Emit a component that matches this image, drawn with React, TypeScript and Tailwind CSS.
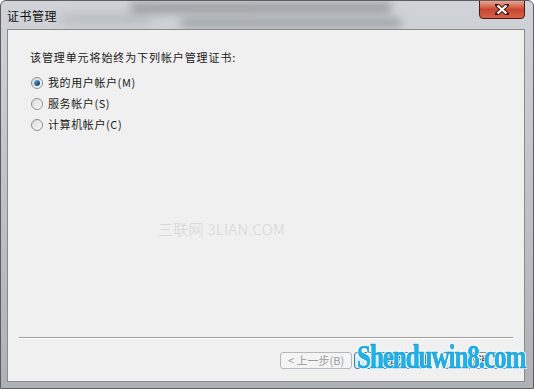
import React from 'react';

const cjk = { fontFamily: '"Noto Sans CJK SC", "Noto Sans", sans-serif' };

function Radio({ checked, label }: { checked?: boolean; label: string }) {
  return (
    <div className="flex items-center h-[21px]">
      <div className="w-[12px] h-[12px] rounded-full border border-[#8e9093] bg-gradient-to-br from-[#d9d9d9] to-[#fbfbfb] flex items-center justify-center shrink-0">
        {checked && (
          <div className="w-[6px] h-[6px] rounded-full bg-gradient-to-br from-[#8cc4e8] via-[#2a6c9c] to-[#0f3e66]" />
        )}
      </div>
      <span className="ml-[5px] text-[11px] leading-none text-[#1a1a1a] tracking-[0.6px]">{label}</span>
    </div>
  );
}

function Btn({ label, kind }: { label: string; kind: 'disabled' | 'default' | 'normal' }) {
  const cls =
    kind === 'disabled'
      ? 'border-[#b5b9bc] bg-[#f4f4f4] text-[#9a9a9a]'
      : kind === 'default'
      ? 'border-[#3c7fb1] bg-gradient-to-b from-[#eaf6fd] to-[#bee6fd] text-[#222]'
      : 'border-[#8c8c8c] bg-gradient-to-b from-[#f2f2f2] to-[#dcdcdc] text-[#222]';
  return (
    <div className={`w-[72px] h-[17px] rounded-[3px] border flex items-center justify-center text-[11px] leading-none ${cls}`}>
      {label}
    </div>
  );
}

export default function App() {
  return (
    <div className="w-[534px] h-[389px] relative overflow-hidden bg-white" style={cjk}>
      <div className="w-full h-full flex flex-col rounded-t-[6px] border border-[#5e5e5e] bg-gradient-to-b from-[#d0d4d8] via-[#bfc3c7] to-[#aeb2b6] relative overflow-hidden">
        {/* blurred glass streaks */}
        <div className="absolute left-[130px] top-[2px] w-[260px] h-[10px] bg-[#7e8286] blur-[5px] opacity-70" />
        <div className="absolute left-[180px] top-[18px] w-[220px] h-[8px] bg-[#73777b] blur-[5px] opacity-60" />
        <div className="absolute left-[60px] top-[14px] w-[90px] h-[8px] bg-[#9ea2a6] blur-[6px] opacity-60" />

        {/* title bar */}
        <div className="h-[28px] flex justify-between pl-[6px] pr-[8px] relative">
          <span className="text-[12px] leading-none text-[#111] mt-[9px] tracking-[0.5px]">证书管理</span>
          <div className="w-[46px] h-[19px] -mt-px rounded-b-[4px] border border-[#4a1a12] bg-gradient-to-b from-[#e8a593] via-[#c8462e] to-[#d8604a] flex items-center justify-center">
            <svg width="14" height="11" viewBox="0 0 14 11">
              <path d="M2 1 L12 10 M12 1 L2 10" stroke="#3a1a14" strokeWidth="4" strokeLinecap="square" />
              <path d="M2.5 1.5 L11.5 9.5 M11.5 1.5 L2.5 9.5" stroke="#ffffff" strokeWidth="2.2" />
            </svg>
          </div>
        </div>

        {/* client area */}
        <div className="flex-1 ml-[6px] mr-[8px] mb-[6px] border border-[#8a8a8a] bg-[#f0f0f0] flex flex-col relative">
          <div className="pl-[22px] pt-[22px]">
            <div className="text-[11px] leading-none text-[#1a1a1a] tracking-[0.9px]">该管理单元将始终为下列帐户管理证书:</div>
            <div className="mt-[9px] pl-[1px] flex flex-col">
              <Radio checked label="我的用户帐户(M)" />
              <Radio label="服务帐户(S)" />
              <Radio label="计算机帐户(C)" />
            </div>
          </div>

          <div className="flex-1 flex items-center pl-[150px]">
            <span className="text-[15px] text-[#d6d6d6] tracking-[0.3px] -mt-[14px]" style={{ fontFamily: '"Noto Sans CJK SC", Lato, sans-serif', fontWeight: 300 }}>
              三联网 3LIAN.COM
            </span>
          </div>

          <div className="mx-[11px] border-t border-[#a0a0a0] border-b border-b-white" />
          <div className="flex justify-end gap-[2px] pr-[10px] pt-[13px] pb-[12px]">
            <Btn label="< 上一步(B)" kind="disabled" />
            <Btn label="完成" kind="default" />
            <div className="w-[12px]" />
            <Btn label="取消" kind="normal" />
          </div>
        </div>
      </div>

      {/* site watermark */}
      <div
        className="absolute left-[357px] top-[340px] text-[34px] font-bold text-[#1cb2ea] leading-none tracking-[-1.5px] origin-left scale-x-[0.74]"
        style={{ fontFamily: '"Liberation Serif", serif', WebkitTextStroke: '0.6px #1590c4', textShadow: '1px 1px 0 #fff, -1px -1px 0 #fff, 1px -1px 0 #fff, -1px 1px 0 #fff' }}
      >
        Shenduwin8.com
      </div>
    </div>
  );
}
